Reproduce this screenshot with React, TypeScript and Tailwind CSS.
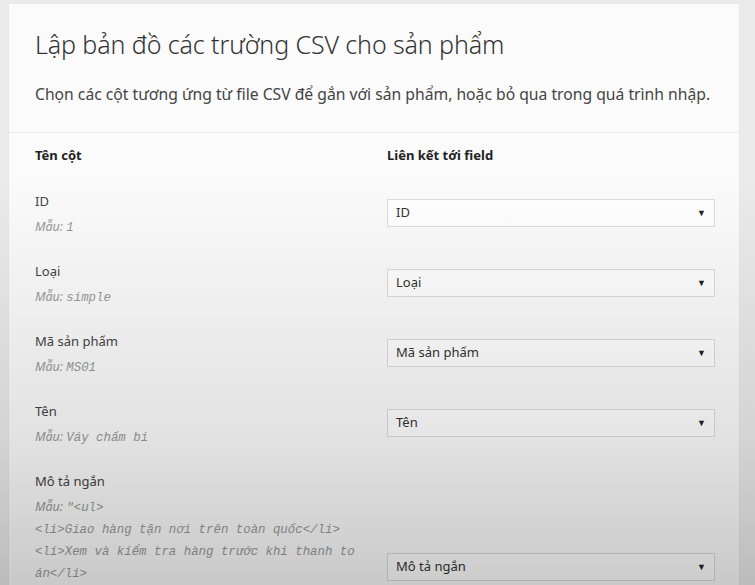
import React from 'react';

const ROWS = [
  { name: 'ID', sample: ['1'], field: 'ID' },
  { name: 'Loại', sample: ['simple'], field: 'Loại' },
  { name: 'Mã sản phẩm', sample: ['MS01'], field: 'Mã sản phẩm' },
  { name: 'Tên', sample: ['Váy chấm bi'], field: 'Tên' },
  {
    name: 'Mô tả ngắn',
    sample: [
      '"<ul>',
      '<li>Giao hàng tận nơi trên toàn quốc</li>',
      '<li>Xem và kiểm tra hàng trước khi thanh to',
      'án</li>',
      '<li>Đổi trả miễn phí trong vòng 7 ngày</li>',
      '<li>Bảo hành chính hãng 12 tháng</li>',
      '</ul>"',
      ' ',
    ],
    field: 'Mô tả ngắn',
  },
];

const sans = "font-['Noto_Sans','Open_Sans',sans-serif]";
const mono = "font-['Liberation_Mono','DejaVu_Sans_Mono',monospace]";

const FieldSelect = ({ value }: { value: string }) => (
  <div className="relative w-full">
    <div className="h-[28px] w-full bg-white border border-[#dcdcdc] pl-[8px] flex items-center text-[13px] text-[#333]">
      {value}
    </div>
    <span className="absolute right-[9px] top-[9px] text-[9px] text-[#222] leading-none">▼</span>
  </div>
);

export default function App() {
  return (
    <div className={`relative h-[585px] overflow-hidden bg-[#ebebeb] pt-[4px] pl-[9px] pr-[16px] ${sans}`}>
      <div className="bg-[#fbfbfb] shadow-[0_0_1px_rgba(0,0,0,0.08)]">
        {/* Header */}
        <div className="pl-[26px] pr-[24px] pt-[25px] pb-[27px] border-b border-[#ececec]">
          <h1 className="text-[25px] font-light text-[#333] tracking-[-0.1px] leading-[30px]">
            Lập bản đồ các trường CSV cho sản phẩm
          </h1>
          <p className="mt-[24px] text-[15.7px] text-[#444] leading-[22px]">
            Chọn các cột tương ứng từ file CSV để gắn với sản phẩm, hoặc bỏ qua trong quá trình nhập.
          </p>
        </div>

        {/* Mapping table */}
        <div className="pl-[26px] pr-[24px]">
          <div className="grid grid-cols-[352px_1fr] pt-[12px] pb-[14px]">
            <div className="text-[13px] font-bold text-[#222] leading-[20px]">Tên cột</div>
            <div className="text-[13px] font-bold text-[#222] leading-[20px]">Liên kết tới field</div>
          </div>

          {ROWS.map((row) => (
            <div key={row.name} className="grid grid-cols-[352px_1fr] items-center py-[12px]">
              <div className="text-[13px]">
                <div className="text-[#444] leading-[20px]">{row.name}</div>
                <div className="text-[#999] italic mt-[4px] leading-[22px]">
                  {row.sample.map((line, i) => (
                    <div key={i} className="h-[22px] whitespace-pre">
                      {i === 0 && <span className={`${sans} text-[12.5px]`}>Mẫu: </span>}
                      <span className={`${mono} text-[12.4px]`}>{line}</span>
                    </div>
                  ))}
                </div>
              </div>
              <div className={row.sample.length > 1 ? 'mb-[8px]' : 'mb-[3px]'}>
                <FieldSelect value={row.field} />
              </div>
            </div>
          ))}
        </div>
      </div>

      {/* video capture vignette */}
      <div className="pointer-events-none absolute inset-0 bg-linear-to-b from-transparent from-[30%] via-black/10 via-[75%] to-black/20" />
    </div>
  );
}
